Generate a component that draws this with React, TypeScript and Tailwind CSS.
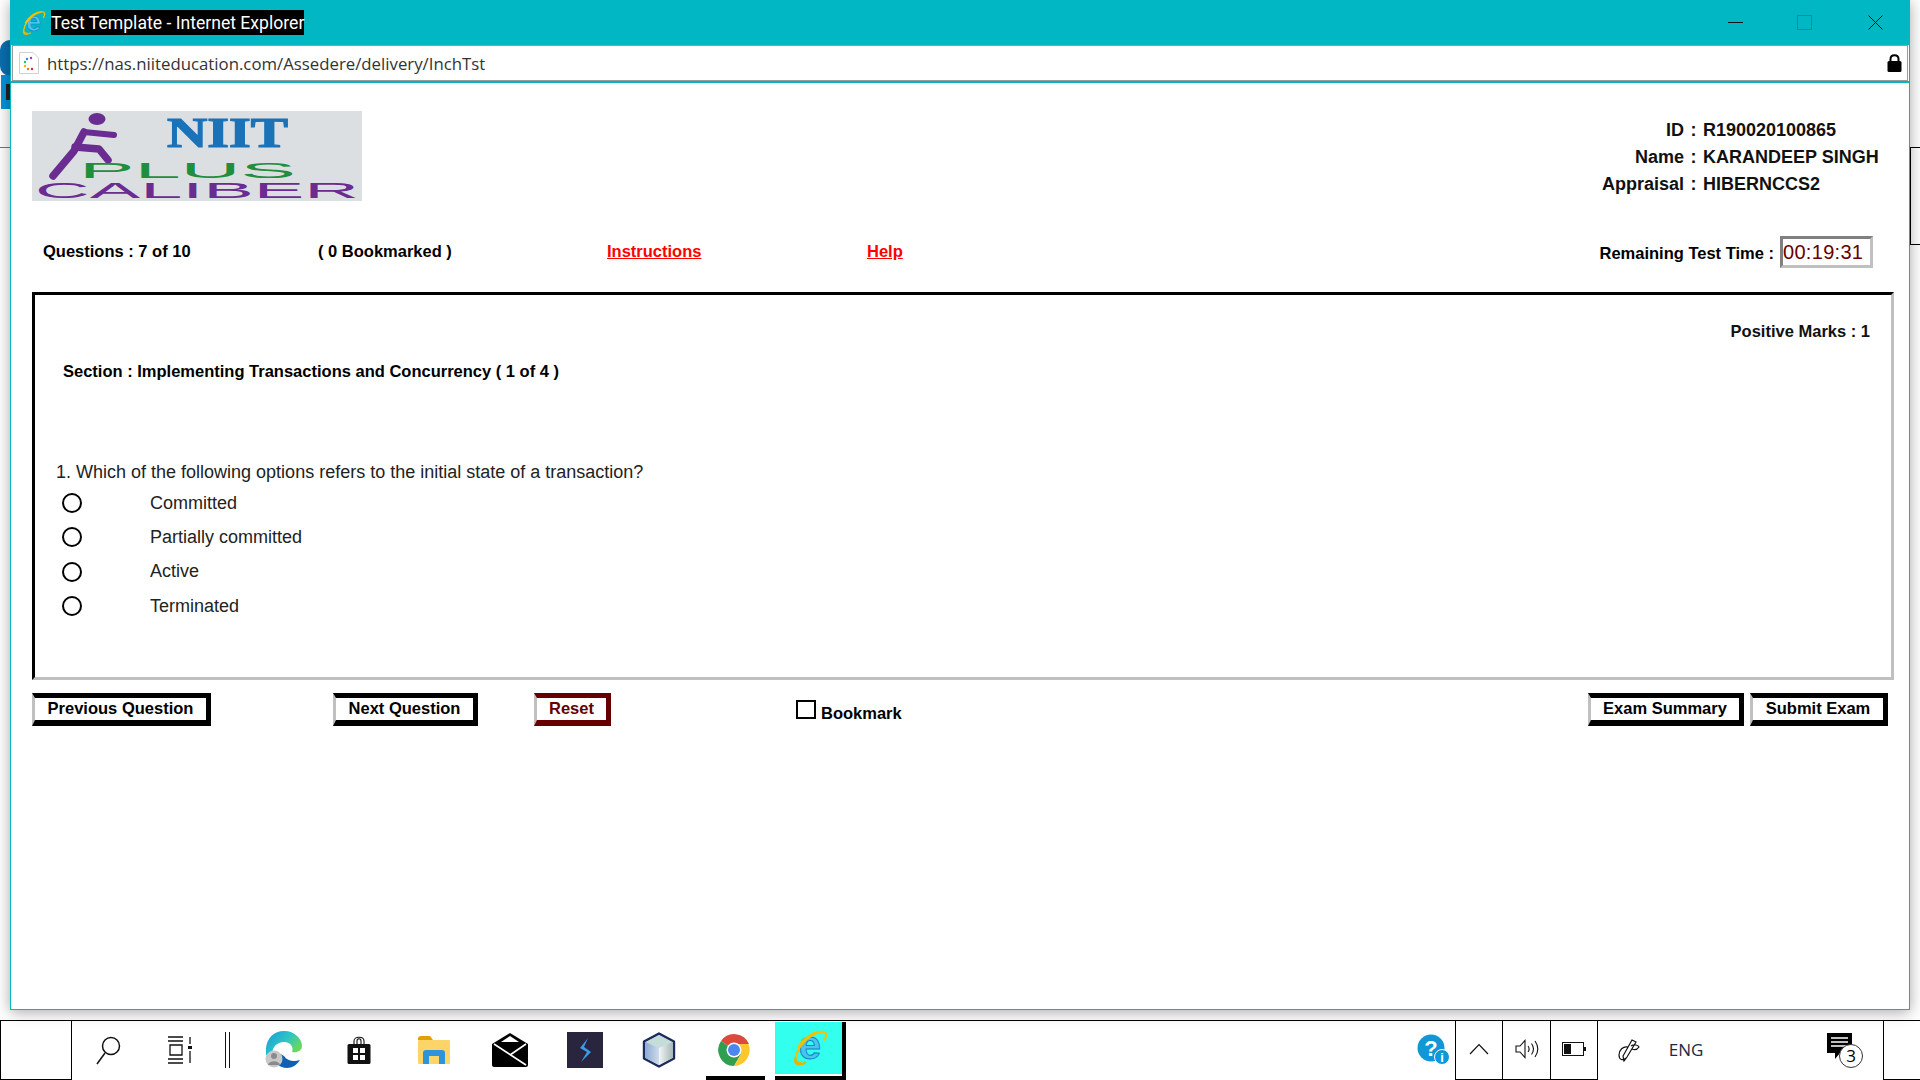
const sans = "font-['Liberation_Sans',Arial,sans-serif]";
const ui = "font-['Open_Sans','Noto_Sans',sans-serif]";

function IeIcon({ size = 24 }: { size?: number }) {
  return (
    <svg width={size} height={size} viewBox="0 0 40 40">
      <text x="21" y="32" textAnchor="middle" fontFamily="'Liberation Sans',sans-serif" fontSize="42" fontWeight="700" fill="#4cc3ee" stroke="#0f86c8" strokeWidth="1">e</text>
      <path d="M6 30 C8 18 20 5 33 3 C39 2 39 7 36 12 M33 3 C25 2 14 10 8 20" fill="none" stroke="#f2c200" strokeWidth="2.2" />
      <path d="M6 30 C3 38 10 39 17 35 M6 30 C5 34 8 36 12 36" fill="none" stroke="#e9b400" strokeWidth="2.2" />
    </svg>
  );
}

function Logo() {
  return (
    <svg width="330" height="90" viewBox="0 0 330 90" className="block bg-[#dcdfe2]">
      {/* runner */}
      <g fill="none" stroke="#6a2c91" strokeLinecap="round" strokeLinejoin="round" strokeWidth="7.5">
        <path d="M52 21 L42 40 L21 65" />
        <path d="M52 21 L82 24" strokeWidth="6" />
        <path d="M43 36 L67 38 L76 49" />
      </g>
      <ellipse cx="65" cy="8" rx="8.5" ry="6" fill="#6a2c91" />
      <text x="135" y="36" textLength="121" lengthAdjust="spacingAndGlyphs" fontFamily="'Liberation Serif',serif" fontWeight="700" fontSize="42" fill="#1a72b8" stroke="#1a72b8" strokeWidth="1.2">NIIT</text>
      <text x="47" y="67" textLength="217" lengthAdjust="spacingAndGlyphs" fontFamily="'Liberation Sans',sans-serif" fontSize="22" fill="#1f8f3e">PLUS</text>
      <text x="3" y="87" textLength="324" lengthAdjust="spacingAndGlyphs" fontFamily="'Liberation Sans',sans-serif" fontSize="22" fill="#6a2c91">CALIBER</text>
    </svg>
  );
}

function ExamButton({ label, width, red }: { label: string; width: string; red?: boolean }) {
  return (
    <button
      className={`${width} h-[33px] pb-[2px] flex items-center justify-center bg-white text-[16.5px] leading-none font-bold whitespace-nowrap border-l-[3px] border-t-[5px] border-r-[5px] border-b-[6px] border-l-[#c0c0c0] ${
        red ? "border-t-[#660000] border-r-[#660000] border-b-[#660000] text-[#660000]" : "border-t-black border-r-black border-b-black text-black"
      }`}
    >
      {label}
    </button>
  );
}

function Option({ label }: { label: string }) {
  return (
    <div className="h-[34.3px] flex items-center">
      <span className="ml-[27px] w-[20px] h-[20px] rounded-full border-2 border-black shrink-0" />
      <span className="ml-[68px] text-[18px] text-[#222]">{label}</span>
    </div>
  );
}

function TaskIcon({ width, children, className = "" }: { width: string; children?: React.ReactNode; className?: string }) {
  return <div className={`${width} h-full pb-[2px] flex items-center justify-center shrink-0 ${className}`}>{children}</div>;
}

function Taskbar() {
  return (
    <div className="h-[60px] shrink-0 flex bg-white border-t border-black">
      <div className="w-[72px] h-[59px] border-r border-b border-l border-black shrink-0" />
      <TaskIcon width="w-[72px]">
        <svg width="26" height="30" viewBox="0 0 26 30" fill="none" stroke="#111" strokeWidth="1.5">
          <circle cx="16" cy="11" r="8.5" />
          <path d="M10 18 L2 29" />
        </svg>
      </TaskIcon>
      <TaskIcon width="w-[72px]">
        <svg width="26" height="28" viewBox="0 0 26 28" fill="none" stroke="#111" strokeWidth="1.3">
          <path d="M1 1 H16 M1 5 H16 M3 9 H15 V19 H3 Z M1 23 H16 M1 27 H16 M23 1 V8 M23 15 V27" />
          <rect x="21" y="10" width="4" height="3" fill="#111" stroke="none" />
        </svg>
      </TaskIcon>
      <TaskIcon width="w-[22px]">
        <div className="w-[5px] h-[36px] border-x border-[#111]" />
      </TaskIcon>
      <TaskIcon width="w-[74px]" className="ml-[8px] mr-[2px]">
        <svg width="37" height="37" viewBox="0 0 37 37">
          <defs>
            <linearGradient id="edgeTop" x1="0" y1="0" x2="1" y2="0.6">
              <stop offset="0" stopColor="#1b9ad6" />
              <stop offset="0.55" stopColor="#2cc3c9" />
              <stop offset="1" stopColor="#6bd85a" />
            </linearGradient>
          </defs>
          <path d="M1 17 C2 7 9 0 19 0 C30 0 37 8 37 15 C37 20 32 22 27 21 C29 17 26 11 19 11 C12 11 7 16 7 24 L1 24 Z" fill="url(#edgeTop)" />
          <path d="M7 24 C8 32 15 37 22 37 C27 37 32 34 35 29 C29 31 22 30 19 25 L12 21 Z" fill="#115fb3" />
          <circle cx="9" cy="28" r="8.5" fill="#c8c8c8" />
          <circle cx="9" cy="25" r="3" fill="#8a8a8a" />
          <path d="M3 34 C4 29 14 29 15 34 Z" fill="#8a8a8a" />
        </svg>
      </TaskIcon>
      <TaskIcon width="w-[74px]">
        <svg width="24" height="28" viewBox="0 0 24 28">
          <path d="M7 9 V5 C7 0 17 0 17 5 V9 M10 9 V5 C10 2 14 2 14 5 V9" fill="none" stroke="#111" strokeWidth="1.1" />
          <rect x="0.5" y="8" width="23" height="20" rx="1.5" fill="#111" />
          <path d="M6 12 H11 V17 H6 Z M13 12 H18 V17 H13 Z M6 19 H11 V24 H6 Z M13 19 H18 V24 H13 Z" fill="#fff" />
        </svg>
      </TaskIcon>
      <TaskIcon width="w-[76px]">
        <svg width="32" height="28" viewBox="0 0 32 28">
          <path d="M0 3 C0 1 1 0 3 0 H12 L15 4 H0 Z" fill="#e0a000" />
          <rect y="4" width="32" height="24" rx="1" fill="#fdd467" />
          <path d="M5 17 C5 15 6 14 8 14 H24 C26 14 27 15 27 17 V28 H21 V20 H11 V28 H5 Z" fill="#2f93dc" />
        </svg>
      </TaskIcon>
      <TaskIcon width="w-[76px]">
        <svg width="36" height="34" viewBox="0 0 36 34">
          <path d="M18 0 L36 11 V32 C36 33 35 34 34 34 H2 C1 34 0 33 0 32 V11 Z" fill="#000" />
          <path d="M18 3 L27 9 H9 Z" fill="#fff" />
          <path d="M2 11 L34 32 M34 11 L18 22" stroke="#fff" strokeWidth="1.6" fill="none" />
        </svg>
      </TaskIcon>
      <TaskIcon width="w-[74px]">
        <svg width="36" height="36" viewBox="0 0 36 36">
          <rect width="36" height="36" fill="#29253f" />
          <path d="M21 6 L13 16 L20 20 L14 30 L24 20 L17 15 Z" fill="#3c9be8" />
        </svg>
      </TaskIcon>
      <TaskIcon width="w-[74px]">
        <svg width="36" height="36" viewBox="0 0 36 36">
          <defs>
            <linearGradient id="cubeLeft" x1="0" y1="0" x2="1" y2="0">
              <stop offset="0" stopColor="#8faad2" />
              <stop offset="1" stopColor="#cfdcec" />
            </linearGradient>
            <linearGradient id="cubeRight" x1="0" y1="0" x2="1" y2="0">
              <stop offset="0" stopColor="#f2f6f6" />
              <stop offset="1" stopColor="#a8b8b8" />
            </linearGradient>
          </defs>
          <path d="M18 1.5 L33 9.5 V26.5 L18 34.5 L3 26.5 V9.5 Z" fill="#c5dbe2" stroke="#1f2a5c" strokeWidth="2.4" strokeLinejoin="round" />
          <path d="M18 16 L5 10 L18 3.5 L31 10 Z" fill="#c5dcd9" />
          <path d="M18 16 V33 L4.5 26 V10 Z" fill="url(#cubeLeft)" />
          <path d="M18 16 V33 L31.5 26 V10 Z" fill="url(#cubeRight)" />
        </svg>
      </TaskIcon>
      <TaskIcon width="w-[76px]" className="relative">
        <svg width="34" height="34" viewBox="0 0 34 34">
          <path d="M17 17 L4 8 A16 16 0 0 1 32 11 L17 11 Z" fill="#dd4a3d" />
          <path d="M17 17 L4 8 A16 16 0 0 0 17 33 L24 21 Z" fill="#2f9e4f" />
          <path d="M17 11 H31.5 A16 16 0 0 1 17 33 L24 21 Z" fill="#fbc62e" />
          <circle cx="17" cy="17" r="7.5" fill="#fff" />
          <circle cx="17" cy="17" r="6" fill="#4a87ef" />
        </svg>
        <div className="absolute left-[10px] right-[7px] bottom-0 h-[4px] bg-black" />
      </TaskIcon>
      <div className="relative ml-[3px] w-[71px] h-full shrink-0 pt-px">
        <div className="w-[67px] h-[52px] bg-[#33ffee] flex items-center justify-center">
          <IeIcon size={38} />
        </div>
        <div className="absolute right-0 top-px w-[4px] h-[58px] bg-black" />
        <div className="absolute left-0 right-0 top-[55px] h-[4px] bg-black" />
      </div>

      <div className="flex-1" />
      <TaskIcon width="w-[40px]" className="mr-[2px]">
        <svg width="34" height="32" viewBox="0 0 34 32">
          <circle cx="15" cy="14" r="13.5" fill="#0f97d6" />
          <text x="15" y="22" textAnchor="middle" fontFamily="'Liberation Sans',sans-serif" fontWeight="700" fontSize="22" fill="#fff">?</text>
          <circle cx="26" cy="23" r="7.5" fill="#0f97d6" stroke="#fff" strokeWidth="1" />
          <text x="26" y="28" textAnchor="middle" fontFamily="'Liberation Sans',sans-serif" fontWeight="700" fontSize="13" fill="#fff">i</text>
        </svg>
      </TaskIcon>
      <div className="flex h-full border-l border-b border-black">
        <TaskIcon width="w-[47px]" className="border-r border-black">
          <svg width="20" height="12" viewBox="0 0 20 12" fill="none" stroke="#111" strokeWidth="1.2">
            <path d="M1 11 L10 1.5 L19 11" />
          </svg>
        </TaskIcon>
        <TaskIcon width="w-[48px]" className="border-r border-black">
          <svg width="24" height="20" viewBox="0 0 24 20" fill="none" stroke="#111" strokeWidth="1.1">
            <path d="M1 7 H5 L10 1.5 V18.5 L5 13 H1 Z" />
            <path d="M13 7 C14.5 9 14.5 11 13 13 M16.5 4.5 C19 8 19 12 16.5 15.5 M20 2 C23.5 7 23.5 13 20 18" />
          </svg>
        </TaskIcon>
        <TaskIcon width="w-[47px]" className="border-r border-black">
          <svg width="24" height="14" viewBox="0 0 24 14">
            <rect x="0.5" y="0.5" width="21" height="13" fill="#fff" stroke="#111" />
            <rect x="2" y="2" width="7" height="10" fill="#111" />
            <rect x="22" y="5" width="2" height="4" fill="#111" />
          </svg>
        </TaskIcon>
      </div>
      <TaskIcon width="w-[61px]">
        <svg width="22" height="24" viewBox="0 0 22 24" fill="none" stroke="#111" strokeWidth="1.2">
          <path d="M14 2 L18 4 L9 19 L6 23 L5 18 Z M10 9 C5 8 1 12 1 17 C1 22 5 23 8 20 M13 8 C16 6 20 7 21 9 C19 12 16 12 14 11" />
        </svg>
      </TaskIcon>
      <div className={`ml-[5px] w-[44px] text-center text-[17px] leading-[58px] text-[#1a2a44] ${ui}`}>ENG</div>
      <div className="w-[175px] h-full flex items-center justify-center shrink-0 pl-[99px]">
        <div className="relative w-[36px] h-[36px]">
          <svg width="26" height="28" viewBox="0 0 26 28" className="absolute left-0 top-0">
            <path d="M0 0 H25 V20 H13 L8 26 V20 H0 Z" fill="#000" />
            <path d="M4 5 H21 M4 9 H21 M4 13 H21" stroke="#fff" strokeWidth="1.4" />
          </svg>
          <span className={`absolute left-[12px] top-[11px] w-[24px] h-[24px] rounded-full bg-white border border-[#333] flex items-center justify-center text-[17px] leading-none text-black ${ui}`}>3</span>
        </div>
      </div>
      <div className="w-[37px] h-[59px] border-l border-b border-black shrink-0" />
    </div>
  );
}

function ExamWindow() {
  return (
    <div className={`relative ml-[10px] w-[1900px] h-[1010px] flex flex-col bg-white border-x border-b border-[#00b7c3] shadow-[0_2px_14px_rgba(0,0,0,0.35)] ${sans}`}>
      {/* title bar */}
      <div className="h-[45px] shrink-0 flex items-center bg-[#00b7c3] pl-[9px]">
        <div className="w-[26px] h-[26px] shrink-0">
          <IeIcon size={26} />
        </div>
        <span className="ml-[5px] h-[25px] w-[253px] pt-px bg-black text-white text-[17.6px] leading-[25px] whitespace-nowrap font-['Roboto',sans-serif]">Test Template - Internet Explorer</span>
        <div className="flex-1" />
        <div className="w-[15px] h-px bg-[#111] mr-[54px]" />
        <div className="w-[15px] h-[15px] border border-[#0a8f99] mr-[56px]" />
        <svg width="15" height="15" viewBox="0 0 15 15" className="mr-[26px]" fill="none" stroke="#111" strokeWidth="1">
          <path d="M0.5 0.5 L14.5 14.5 M14.5 0.5 L0.5 14.5" />
        </svg>
      </div>
      {/* address bar */}
      <div className="h-[36px] shrink-0 flex items-center bg-white border border-[#9a9a9a] ml-px mr-px pl-[5px]">
        <svg width="22" height="24" viewBox="0 0 22 24">
          <path d="M1.5 1.5 H15 L20.5 7 V22.5 H1.5 Z" fill="#fff" stroke="#d0d0d0" />
          <circle cx="13" cy="7" r="1.2" fill="#8e44ad" />
          <circle cx="9" cy="8" r="1.2" fill="#3b82f6" />
          <circle cx="7" cy="11" r="1.2" fill="#22c55e" />
          <circle cx="7" cy="15" r="1.2" fill="#eab308" />
          <circle cx="10" cy="18" r="1.2" fill="#f97316" />
          <circle cx="14" cy="18" r="1.2" fill="#dc2626" />
        </svg>
        <span className={`ml-[7px] pt-[1px] text-[16.8px] text-[#333] whitespace-nowrap ${ui}`}>https://nas.niiteducation.com/Assedere/delivery/InchTst</span>
        <div className="flex-1" />
        <svg width="15" height="18" viewBox="0 0 15 18" className="mr-[5px]">
          <path d="M3.5 8 V5 C3.5 0 11.5 0 11.5 5 V8" fill="none" stroke="#000" strokeWidth="2" />
          <rect x="0.5" y="7" width="14" height="11" rx="1.5" fill="#000" />
        </svg>
      </div>
      <div className="h-[2px] shrink-0 bg-[#00b7c3]" />

      {/* page */}
      <div className="flex-1 px-[21px] text-black">
        <div className="flex justify-between pt-[28px] h-[133px]">
          <Logo />
          <div className="w-[300px] mr-[7px] pt-[6px] text-[18px] leading-[27px] font-bold text-[#111]">
            {[
              ["ID", "R190020100865"],
              ["Name", "KARANDEEP SINGH"],
              ["Appraisal", "HIBERNCCS2"],
            ].map(([k, v]) => (
              <div key={k} className="flex">
                <span className="w-[103px] shrink-0 text-right">{k}</span>
                <span className="w-[19px] shrink-0 text-center">:</span>
                <span className="whitespace-nowrap">{v}</span>
              </div>
            ))}
          </div>
        </div>

        <div className="h-[76px] pt-[18px] flex items-start text-[16.5px] font-bold">
          <div className="w-[286px] pl-[11px] h-[35px] leading-[35px] whitespace-nowrap">Questions : 7 of 10</div>
          <div className="w-[289px] h-[35px] leading-[35px] whitespace-nowrap">( 0 Bookmarked )</div>
          <div className="w-[260px] h-[35px] leading-[35px] text-[#ff0000] underline">Instructions</div>
          <div className="h-[35px] leading-[35px] text-[#ff0000] underline">Help</div>
          <div className="flex-1" />
          <div className="h-[35px] leading-[39px] whitespace-nowrap mr-[6px]">Remaining Test Time :</div>
          <div className="w-[93px] h-[32px] mt-[2px] mr-[15px] border-[3px] border-[#c0c0c0] border-t-[#808080] border-l-[#808080] text-[#660000] text-[20px] font-normal leading-[26px] tracking-[0.3px]">00:19:31</div>
        </div>

        <div className="w-[1862px] h-[388px] border-[3px] border-black border-r-[#c0c0c0] border-b-[#c0c0c0]">
          <div className="text-right pr-[21px] pt-[24px] text-[16.5px] leading-[24px] font-bold text-[#111]">Positive Marks : 1</div>
          <div className="pl-[28px] pt-[16px] text-[16.5px] leading-[24px] font-bold">Section : Implementing Transactions and Concurrency ( 1 of 4 )</div>
          <div className="pl-[21px] pt-[77px] text-[18px] leading-[24px] text-[#222]">1. Which of the following options refers to the initial state of a transaction?</div>
          <div className="pt-[2px]">
            <Option label="Committed" />
            <Option label="Partially committed" />
            <Option label="Active" />
            <Option label="Terminated" />
          </div>
        </div>

        <div className="flex items-start pt-[13px]">
          <ExamButton label="Previous Question" width="w-[179px]" />
          <div className="w-[122px]" />
          <ExamButton label="Next Question" width="w-[145px]" />
          <div className="w-[56px]" />
          <ExamButton label="Reset" width="w-[77px]" red />
          <div className="w-[185px]" />
          <div className="flex items-start">
            <span className="w-[20px] h-[19px] mt-[7px] border-2 border-black" />
            <span className="ml-[5px] mt-[8px] text-[16.5px] leading-[24px] font-bold whitespace-nowrap">Bookmark</span>
          </div>
          <div className="flex-1" />
          <ExamButton label="Exam Summary" width="w-[156px]" />
          <div className="w-[6px]" />
          <ExamButton label="Submit Exam" width="w-[138px]" />
        </div>
      </div>
    </div>
  );
}

export default function App() {
  return (
    <div className="relative w-full h-screen overflow-hidden flex flex-col bg-white">
      {/* bits of the desktop behind the window */}
      <div className="absolute left-0 top-[40px] w-[20px] h-[36px] rounded-full bg-[#0a6fb0]" />
      <div className="absolute left-px top-[75px] w-[10px] h-[34px] bg-[#0095d9]">
        <div className="mt-[9px] ml-[5px] w-[5px] h-[16px] bg-[#222]" />
      </div>
      <div className="absolute left-0 top-[147px] w-[10px] h-px bg-[#777]" />
      <div className="absolute right-0 top-[147px] w-[10px] h-[98px] border border-r-0 border-black" />

      <div className="h-[1020px] shrink-0">
        <ExamWindow />
      </div>
      <Taskbar />
    </div>
  );
}
